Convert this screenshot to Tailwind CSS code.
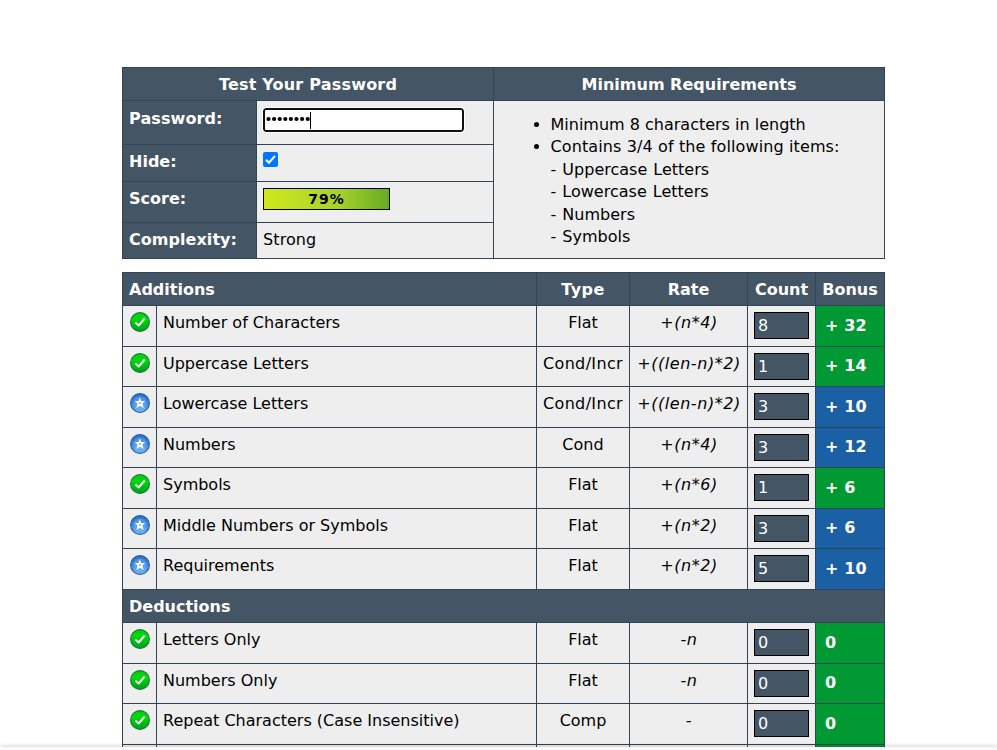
<!DOCTYPE html>
<html lang="en">
<head>
<meta charset="utf-8">
<title>Password Strength</title>
<script src="https://cdn.jsdelivr.net/npm/@tailwindcss/browser@4"></script>
</head>
<body class="h-[750px] overflow-hidden bg-white font-['Verdana','DejaVu_Sans',sans-serif] text-[16px] leading-[22px] text-black">
<svg class="absolute h-0 w-0">
  <defs>
    <linearGradient id="g" x1="0" y1="0" x2="0" y2="1"><stop offset="0" stop-color="#08c818"/><stop offset=".35" stop-color="#00dc08"/><stop offset="1" stop-color="#009c20"/></linearGradient>
    <linearGradient id="b" x1="0" y1="0" x2="0" y2="1"><stop offset="0" stop-color="#2b6fc4"/><stop offset=".45" stop-color="#3484dc"/><stop offset="1" stop-color="#79bdf5"/></linearGradient>
    <symbol id="check" viewBox="0 0 20 20"><circle cx="10" cy="10" r="9.4" fill="url(#g)" stroke="#17803a" stroke-width="1.2"/><path d="M5.4 10.4 8.7 13.4 14.7 6.5" fill="none" stroke="#fff" stroke-width="2"/></symbol>
    <symbol id="star" viewBox="0 0 20 20"><circle cx="10" cy="10" r="9.4" fill="url(#b)" stroke="#2863ad" stroke-width="1.2"/><circle cx="10" cy="9.6" r="6.4" fill="#8fc1f2" opacity=".35"/><path d="M9.7 4.2 11.2 7.9 15.2 8.1 12.4 10.6 13.6 15 9.9 12.7 6.4 15 7.5 10.6 4.6 8.1 8.4 7.9Z" fill="#fff"/><circle cx="9.9" cy="10" r="1.3" fill="#9cc6f1"/></symbol>
  </defs>
</svg>
<main class="ml-[122px] w-[763px] pt-[67px]">
  <section class="grid h-[192px] grid-cols-[370px_390px] grid-rows-[32px_157px] gap-px bg-[#334455] p-px">
    <h2 class="bg-[#445566] pt-[6px] text-center font-bold tracking-[0.2px] text-white">Test Your Password</h2>
    <h2 class="bg-[#445566] pt-[6px] text-center font-bold text-white">Minimum Requirements</h2>
    <div class="grid grid-cols-[133px_236px] grid-rows-[43px_36px_40px_35px] gap-px">
      <div class="bg-[#445566] pt-[7px] pl-1.5 font-bold tracking-[0.1px] text-white">Password:</div>
      <div class="bg-[#eeeeee] pt-[7px] pl-1.5"><div class="flex h-6 w-[201px] items-center rounded-[3px] border-2 border-[#101010] bg-white pl-px outline outline-white"><svg class="h-4 w-[45px]" viewBox="0 0 45 16"><g fill="#000"><circle cx="2.5" cy="7" r="2.1"/><circle cx="8.1" cy="7" r="2.1"/><circle cx="13.7" cy="7" r="2.1"/><circle cx="19.3" cy="7" r="2.1"/><circle cx="24.9" cy="7" r="2.1"/><circle cx="30.5" cy="7" r="2.1"/><circle cx="36.1" cy="7" r="2.1"/><circle cx="41.7" cy="7" r="2.1"/></g></svg><span class="-ml-px h-[17px] w-px bg-black"></span></div></div>
      <div class="bg-[#445566] pt-[6px] pl-1.5 font-bold text-white">Hide:</div>
      <div class="bg-[#eeeeee] pt-[7px] pl-1.5"><svg class="h-[15px] w-[15px]" viewBox="0 0 15 15"><rect width="15" height="15" rx="2" fill="#0075ff"/><path d="M2.9 7.8 5.9 10.8 12.1 3.9" fill="none" stroke="#fff" stroke-width="2.1"/></svg></div>
      <div class="bg-[#445566] pt-[6px] pl-1.5 font-bold text-white">Score:</div>
      <div class="bg-[#eeeeee] pt-[6px] pl-1.5"><div class="h-[22px] w-[127px] border border-black bg-linear-to-r from-[#cfe81b] via-[#a6d22c] via-60% to-[#66aa22] text-center text-[14px] leading-[21px] font-bold tracking-[1px]">79%</div></div>
      <div class="bg-[#445566] pt-[6px] pl-1.5 font-bold tracking-[0.05px] text-white">Complexity:</div>
      <div class="bg-[#eeeeee] pt-[6px] pl-1.5 tracking-[0.1px]">Strong</div>
    </div>
    <ul class="list-disc bg-[#eeeeee] pt-[13px] pl-[56.5px] leading-[22.4px]">
      <li>Minimum 8 characters in length</li>
      <li><span class="tracking-[0.12px]">Contains 3/4 of the following items:</span><br><span class="[word-spacing:1px]">- Uppercase Letters<br>- Lowercase Letters<br>- Numbers<br>- Symbols</span></li>
    </ul>
  </section>
  <section id="rows" class="mt-[13px] grid grid-cols-[33px_379px_92px_117px_67px_68px] grid-rows-[32px_40px_39px_40px_39px_40px_39px_40px_32px_40px_39px_40px_39px] gap-px bg-[#334455] p-px">
    <h2 class="col-span-2 bg-[#445566] pt-[6px] pl-1.5 font-bold text-white">Additions</h2>
    <h2 class="bg-[#445566] pt-[6px] text-center font-bold tracking-[0.4px] text-white">Type</h2>
    <h2 class="bg-[#445566] pt-[6px] text-center font-bold text-white">Rate</h2>
    <h2 class="bg-[#445566] pt-[6px] text-center font-bold text-white">Count</h2>
    <h2 class="bg-[#445566] pt-[6px] text-center font-bold text-white">Bonus</h2>
  </section>
</main>
<footer class="fixed inset-x-0 bottom-0 h-[3px] bg-[#fafafa] shadow-[0_-1px_4px_rgba(0,0,0,0.2)]"></footer>
<script>
const data = [
  ['check','Number of Characters','Flat','+(n*4)','8','+ 32'],
  ['check','Uppercase Letters','Cond/Incr','+((len-n)*2)','1','+ 14'],
  ['star','Lowercase Letters','Cond/Incr','+((len-n)*2)','3','+ 10'],
  ['star','Numbers','Cond','+(n*4)','3','+ 12'],
  ['check','Symbols','Flat','+(n*6)','1','+ 6'],
  ['star','Middle Numbers or Symbols','Flat','+(n*2)','3','+ 6'],
  ['star','Requirements','Flat','+(n*2)','5','+ 10'],
  null,
  ['check','Letters Only','Flat','-n','0','0'],
  ['check','Numbers Only','Flat','-n','0','0'],
  ['check','Repeat Characters (Case Insensitive)','Comp','-','0','0'],
  ['check','','','','','']
];
const tone = { check: 'bg-[#009933]', star: 'bg-[#1b5fa4]' };
const tall = [0, 2, 4, 6, 8, 10];
document.getElementById('rows').insertAdjacentHTML('beforeend', data.map((r, i) => r ? `
  <div class="bg-[#eeeeee] pt-1.5 pl-[7px]"><svg class="h-5 w-5"><use href="#${r[0]}"/></svg></div>
  <div class="bg-[#eeeeee] pt-[6px] pl-1.5">${r[1]}</div>
  <div class="bg-[#eeeeee] pt-[6px] text-center ${r[2].includes('/') ? 'tracking-[0.35px]' : ''}">${r[2]}</div>
  <div class="bg-[#eeeeee] pt-[6px] pl-px text-center tracking-[0.55px] italic">${r[3]}</div>
  <div class="bg-[#eeeeee] pt-1.5 pl-1.5"><div class="h-[27px] w-[55px] border border-black bg-[#445566] pl-[3px] leading-[26px] text-white">${r[4]}</div></div>
  <div class="${tone[r[0]]} ${tall.includes(i) ? 'pt-[9px]' : 'pt-[8px]'} pl-[9px] font-bold tracking-[0.1px] text-white">${r[5]}</div>` :
  '<h2 class="col-span-6 bg-[#445566] pt-[6px] pl-1.5 font-bold text-white">Deductions</h2>').join(''));
</script>
</body>
</html>
